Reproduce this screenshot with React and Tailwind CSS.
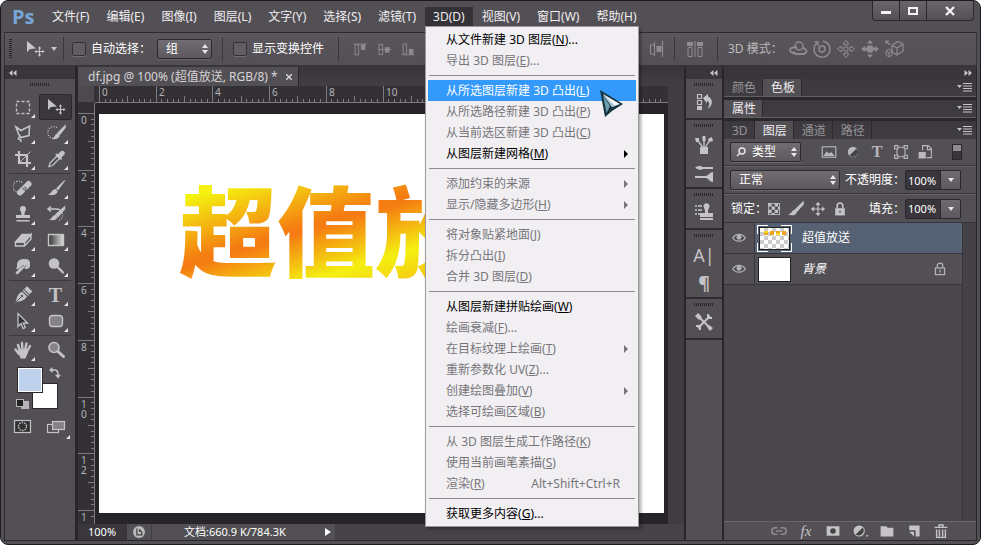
import { useState } from 'react'

const MENUS = [
  ['文件', 'F'], ['编辑', 'E'], ['图像', 'I'], ['图层', 'L'], ['文字', 'Y'], ['选择', 'S'],
  ['滤镜', 'T'], ['3D', 'D'], ['视图', 'V'], ['窗口', 'W'], ['帮助', 'H'],
]

const MENU_3D = [
  [
    { text: '从文件新建 3D 图层', hot: 'N', dots: true, on: true },
    { text: '导出 3D 图层', hot: 'E', dots: true },
  ],
  [
    { text: '从所选图层新建 3D 凸出', hot: 'L', on: true, active: true },
    { text: '从所选路径新建 3D 凸出', hot: 'P' },
    { text: '从当前选区新建 3D 凸出', hot: 'C' },
    { text: '从图层新建网格', hot: 'M', on: true, sub: true },
  ],
  [
    { text: '添加约束的来源', sub: true },
    { text: '显示/隐藏多边形', hot: 'H', sub: true },
  ],
  [
    { text: '将对象贴紧地面', hot: 'J' },
    { text: '拆分凸出', hot: 'I' },
    { text: '合并 3D 图层', hot: 'D' },
  ],
  [
    { text: '从图层新建拼贴绘画', hot: 'W', on: true },
    { text: '绘画衰减', hot: 'F', dots: true },
    { text: '在目标纹理上绘画', hot: 'T', sub: true },
    { text: '重新参数化 UV', hot: 'Z', dots: true },
    { text: '创建绘图叠加', hot: 'V', sub: true },
    { text: '选择可绘画区域', hot: 'B' },
  ],
  [
    { text: '从 3D 图层生成工作路径', hot: 'K' },
    { text: '使用当前画笔素描', hot: 'S' },
    { text: '渲染', hot: 'R', keys: 'Alt+Shift+Ctrl+R' },
  ],
  [{ text: '获取更多内容', hot: 'G', dots: true, on: true }],
]

function Icon({ children, className = 'size-5' }) {
  return (
    <svg viewBox="0 0 20 20" className={className} fill="none" stroke="currentColor" strokeWidth="1.4" aria-hidden="true">
      {children}
    </svg>
  )
}

/* toolbox drawings */
const MoveIcon = () => (
  <Icon>
    <path d="M2 2v11l3-3 6-.4z" fill="currentColor" stroke="none" />
    <path d="M14.500 8v9M10 12.500h9" strokeWidth="1.200" />
    <path d="M12.800 9.500l1.700-2.200 1.700 2.200zM12.800 15.500l1.700 2.200 1.700-2.200zM11.600 10.800l-2.200 1.700 2.200 1.700zM17.400 10.800l2.200 1.700-2.200 1.700z" fill="currentColor" stroke="none" />
  </Icon>
)
const Marquee = () => <Icon><rect x="3.500" y="4.500" width="13" height="12" strokeDasharray="3 2" /></Icon>
const Lasso = () => (
  <Icon>
    <path d="M3 4l5 3.500L16.500 3 16 12.500 8 14.500 5.500 11z" strokeWidth="1.600" />
    <path d="M8 14.500c-3-1-3.500 2-1.500 2s2 1 1 2.500" />
  </Icon>
)
const QuickSelect = () => (
  <Icon>
    <path d="M11 4.500a6 6 0 1 0-2 11" strokeDasharray="1 1.500" />
    <path d="M19 3l-7 7 1.500 1.500L19 4.500z" fill="currentColor" />
    <path d="M11.500 10.500c-3 .5-2 4-5.500 5 4 1.500 8-.5 7.500-3.500z" fill="currentColor" stroke="none" />
  </Icon>
)
const Crop = () => (
  <Icon>
    <path d="M6 2v12h12M2 6h12v12" strokeWidth="2.200" />
    <path d="M6 14L17.500 2.500" strokeWidth="1" />
  </Icon>
)
const Eyedropper = () => (
  <Icon>
    <path d="M3 17.500l1-3.500 7-7 2.500 2.500-7 7z" strokeWidth="1.300" />
    <path d="M10 5l5.500 5.500M12.500 6l3-3c1.500-1 3 .8 2 2l-3 3z" fill="currentColor" strokeWidth="2" />
  </Icon>
)
const Healing = () => (
  <Icon>
    <path d="M9 4.500a5.500 5.500 0 1 0-5 9.500" strokeDasharray="1 1.500" />
    <path d="M7 14.500l8.500-8.500" strokeWidth="6" strokeLinecap="round" />
    <path d="M9 9.500l4.500 4.500M10.500 8l4.500 4.500" stroke="#555" strokeWidth=".8" />
    <path d="M10.500 11h.8M12 12.500h.8M12.500 10h.8" stroke="#333" />
  </Icon>
)
const Brush = () => (
  <Icon>
    <path d="M18.500 2L10 10.500l2 2L19 3z" fill="currentColor" stroke="none" />
    <path d="M9.500 11c-3.500 0-3 4-7.500 5.500 4 1.500 9.500.5 9.500-3.500z" fill="currentColor" stroke="none" />
  </Icon>
)
const Stamp = () => (
  <Icon>
    <path d="M7 5a3 3 0 1 1 6 0c0 2-1.500 2.500-1.500 6H17v3H3v-3h5.500C8.500 7.500 7 7 7 5z" fill="currentColor" stroke="none" />
    <path d="M3.500 16.700h13" />
  </Icon>
)
const HistoryBrush = () => (
  <Icon>
    <path d="M2 5h8c3 0 4 1 4 1M5 2.500L2 5l3 2.500" strokeWidth="1.600" />
    <path d="M18.500 3L10 10.500l2 2L18.500 5z" fill="currentColor" />
    <path d="M9.500 11c-3.500 0-3 3.500-6.500 4.500 4 1.500 8.500.5 8.500-2.500z" fill="currentColor" stroke="none" />
    <path d="M16 9c1.500 3 0 6-4 8" strokeDasharray="1 1.500" />
  </Icon>
)
const Eraser = () => (
  <Icon>
    <path d="M2.500 12L9 4.500h9L11.500 12z" fill="currentColor" />
    <path d="M2.500 12v4h9l6.500-7V4.500L11.500 12v4M2.500 12h9" />
  </Icon>
)
const Gradient = () => (
  <Icon>
    <defs>
      <linearGradient id="toolFade"><stop stopColor="#333" /><stop offset="1" stopColor="#ddd" /></linearGradient>
    </defs>
    <rect x="2.500" y="4.500" width="15" height="11" fill="url(#toolFade)" />
  </Icon>
)
const Smudge = () => (
  <Icon>
    <path d="M4 9c0-4 3-6 7-6 3 0 6 .5 6 4v3c0 2-2 3-4 3l-2-1-6 6c-1.500 1-3-.5-2-2l4-4-2 1c-1.500.5-2.500-1-1-2z" fill="currentColor" stroke="none" />
    <path d="M7 12l4-3M10.500 12l3-2.500" stroke="#666" strokeWidth=".8" />
  </Icon>
)
const Dodge = () => (
  <Icon>
    <circle cx="8" cy="7.500" r="5.300" fill="currentColor" stroke="none" />
    <path d="M11.500 11l5.500 5.500" strokeWidth="2.200" strokeLinecap="round" />
  </Icon>
)
const Pen = () => (
  <Icon>
    <path d="M2.500 17.500C4 13 4 9.500 9 6.500l5 5c-3 4.500-6.500 4.500-11.500 6z" fill="currentColor" stroke="none" />
    <path d="M3 17l5.500-5.500" stroke="#555" strokeWidth="1" />
    <circle cx="9" cy="11" r="1.200" fill="#555" stroke="none" />
    <path d="M10 5l5.500 5.500M12 4l2-2 4.500 4.500-2 2z" fill="currentColor" strokeWidth="1.200" />
  </Icon>
)
const TypeTool = () => <span className="font-['Liberation_Serif',serif] text-[20px] leading-5 font-bold">T</span>
const PathSelect = () => <Icon><path d="M5 2.500v13l3-3 2.200 5 2-1-2-4.500h4.300z" fill="#333" strokeWidth="1.300" /></Icon>
const RoundRect = () => <Icon><rect x="3.500" y="4.500" width="13" height="11" rx="3" fill="#858287" /></Icon>
const Hand = () => (
  <Icon>
    <path d="M6 14L2.500 9.500M7 11L5 5M9.500 10L9 3M12 10l1.500-6.500M14 11.500L17 6" strokeWidth="2.400" strokeLinecap="round" />
    <path d="M4 11.500l3-2.500h7l1 2.500c0 3-2 4.500-2.500 7h-5c-.5-3-2-4-3.500-7z" fill="currentColor" stroke="none" />
  </Icon>
)
const ZoomTool = () => (
  <Icon>
    <circle cx="8" cy="7.500" r="5" fill="#858287" strokeWidth="1.600" />
    <path d="M12 11.500l5.500 5" strokeWidth="3" strokeLinecap="round" />
  </Icon>
)

const TOOL_GROUPS = [
  [['矩形选框', Marquee], ['移动', MoveIcon], ['套索', Lasso], ['快速选择', QuickSelect], ['裁剪', Crop], ['吸管', Eyedropper]],
  [['修复画笔', Healing], ['画笔', Brush], ['图章', Stamp], ['历史画笔', HistoryBrush], ['橡皮擦', Eraser], ['渐变', Gradient], ['涂抹', Smudge], ['减淡', Dodge]],
  [['钢笔', Pen], ['文字', TypeTool], ['路径选择', PathSelect], ['圆角矩形', RoundRect]],
  [['抓手', Hand], ['缩放', ZoomTool]],
]

function Grip() {
  return <div className="mx-auto h-[3px] w-5 bg-[repeating-linear-gradient(90deg,#2b282d_0_1px,transparent_1px_2px)]" />
}

function UpDown() {
  return (
    <svg viewBox="0 0 6 10" className="pointer-events-none absolute top-1/2 right-1 h-2.5 w-1.5 -translate-y-1/2" fill="#e8e6e9" aria-hidden="true">
      <path d="M3 0l3 4H0zM3 10l3-4H0z" />
    </svg>
  )
}

function Dropdown({ label, value, className, pad = 'pl-2' }) {
  return (
    <span className={`relative block h-5 ${className}`}>
      <select
        aria-label={label}
        className={`block h-5 w-full appearance-none rounded-xs border border-[#2d2a2f] bg-linear-to-b from-[#716d72] to-[#5c585d] pr-3 ${pad} text-[12px] leading-[18px] text-white shadow-[0_1px_0_#6a666b] outline-none`}
      >
        <option>{value}</option>
      </select>
      <UpDown />
    </span>
  )
}

function VRule({ className = '' }) {
  return <div className={`h-6 w-px shrink-0 bg-[#3a373c] ${className}`} />
}

function Menu3D() {
  return (
    <div role="menu" className="absolute top-full left-0 z-50 w-[214px] border border-[#9c999d] bg-[#f1eff2] py-0.5 shadow-[2px_2px_3px_rgba(0,0,0,.35)]">
      {MENU_3D.map((group, i) => (
        <div key={i}>
          {i > 0 && <div className="mx-[3px] my-1 h-px bg-[#8f8c90]" />}
          {group.map((item) => (
            <button
              key={item.text}
              role="menuitem"
              disabled={!item.on}
              className={`relative mx-0.5 flex h-[21px] w-[208px] items-center pl-[18px] text-left text-[12px] whitespace-pre ${
                item.active ? 'bg-[#3399fb] text-white' : item.on ? 'text-black' : 'text-[#77757a]'
              }`}
            >
              <span>
                {item.text}
                {item.hot && <>(<u className="underline-offset-1">{item.hot}</u>)</>}
                {item.dots && '...'}
              </span>
              {item.keys && <span className="mr-4 ml-auto">{item.keys}</span>}
              {item.sub && (
                <svg viewBox="0 0 4 8" className="mr-2 ml-auto h-2 w-1" fill="currentColor" aria-hidden="true"><path d="M0 0l4 4-4 4z" /></svg>
              )}
              {item.active && <Pointer />}
            </button>
          ))}
        </div>
      ))}
    </div>
  )
}

function Pointer() {
  return (
    <svg viewBox="0 0 24 28" className="absolute top-2.5 left-[172px] z-10 h-7 w-6" aria-hidden="true">
      <path d="M0 0l5 27 7-6 11-7z" fill="#14333f" />
      <path d="M3 5l3.500 18L10 16z" fill="#6fa0b2" />
      <path d="M3 4l9 13 8-3z" fill="#f2f8fa" />
      <path d="M3 4l9 13 3-1z" fill="#a8c3cd" />
    </svg>
  )
}

function MenuBar() {
  return (
    <header className="flex h-[31px] shrink-0 items-center pl-2">
      <span className="w-8 font-['Open_Sans',sans-serif] text-[20px] leading-7 font-bold text-[#78a5d6]">Ps</span>
      <nav className="flex gap-px text-[12px] text-[#f0eef1]">
        {MENUS.map(([name, key]) => (
          <div key={name} className="relative">
            <button className={`h-[19px] px-2 whitespace-nowrap ${name === '3D' ? 'bg-[#353237]' : ''}`}>
              {name}({key})
            </button>
            {name === '3D' && <Menu3D />}
          </div>
        ))}
      </nav>
      <div className="mr-[3px] ml-auto flex h-5 self-start overflow-hidden rounded-b border border-t-0 border-[#2a272c] bg-linear-to-b from-[#69656a] to-[#545055] text-[#f2f0f3]">
        <button aria-label="最小化" className="flex w-[27px] items-center justify-center border-r border-[#2a272c]"><span className="mt-1 h-[3px] w-2.5 bg-current" /></button>
        <button aria-label="最大化" className="flex w-[27px] items-center justify-center border-r border-[#2a272c]"><span className="h-2 w-2.5 border-2 border-current" /></button>
        <button aria-label="关闭" className="flex w-[46px] items-center justify-center">
          <svg viewBox="0 0 10 10" className="size-2.5" stroke="currentColor" strokeWidth="2.400"><path d="M1 1l8 8M9 1L1 9" /></svg>
        </button>
      </div>
    </header>
  )
}

function Align() {
  return (
    <>
      {['M3 4.500h14', 'M3 10.500h15', 'M3 16.500h14'].map((bar, i) => (
        <button key={bar} aria-label={['顶', '中', '底'][i]}>
          <Icon className="size-[18px]">
            <path d={bar} strokeWidth="1" />
            <rect x="4.500" y={[5.5, 5, 4.5][i]} width="4" height="11" strokeWidth="1" />
            <rect x="11" y={[5, 8, 10][i]} width="5" height="6" fill="currentColor" stroke="none" />
          </Icon>
        </button>
      ))}
    </>
  )
}

function OptionsBar() {
  const box = 'size-3.5 appearance-none rounded-xs border border-[#343136] bg-[#615d62] shadow-[0_1px_0_#716d72] checked:bg-[#9a979b]'
  return (
    <div className="flex h-[34px] shrink-0 items-center border border-b-[#39363b] border-t-[#2d2a2f] border-x-[#39363b] bg-linear-to-b from-[#5a565b] to-[#535055] text-[12px] text-white">
      <div className="ml-1 h-5 w-[3px] shrink-0 bg-[repeating-linear-gradient(#2b282d_0_1px,transparent_1px_2px)]" />
      <button aria-label="工具预设" className="ml-[13px] flex shrink-0 items-center text-[#c9c7ca]">
        <MoveIcon />
        <svg viewBox="0 0 6 4" className="ml-1.5 h-1 w-1.5" fill="currentColor"><path d="M0 0h6L3 4z" /></svg>
      </button>
      <VRule className="ml-1.5" />
      <label className="ml-2 flex shrink-0 items-center gap-[5px]"><input type="checkbox" className={box} />自动选择：</label>
      <Dropdown label="自动选择" value="组" className="ml-1.5 w-[55px] shrink-0" />
      <VRule className="ml-2.5" />
      <label className="ml-2.5 flex shrink-0 items-center gap-[5px]"><input type="checkbox" className={box} />显示变换控件</label>
      <VRule className="ml-3.5" />
      <div className="ml-3 flex shrink-0 items-center gap-1.5 text-[#8f8c90]"><Align /></div>
      <div className="ml-auto flex shrink-0 items-center text-[#8f8c90]">
        <Icon><path d="M4.500 6h4v9h-4zM16.500 2v16M8.500 3v14" strokeWidth="1.100" /><path d="M10.500 7h5v6h-5z" fill="currentColor" stroke="none" /></Icon>
        <VRule className="ml-2" />
        <Icon className="ml-2.5 size-5"><path d="M2 3h6v4H2zM12 3h6v4h-6z" fill="currentColor" stroke="none" /><path d="M3 8.500h4v9H3zM13 8.500h4v9h-4zM10 2v16" strokeWidth="1" /></Icon>
        <VRule className="ml-3" />
        <span className="mx-2.5 w-[50px] whitespace-nowrap text-[#bbb9bc]">3D 模式：</span>
        <div className="mr-[72px] flex gap-1">
          <Icon><circle cx="11" cy="7" r="4" /><path d="M9 8.500c-9-1-9 5-2 6l-1-2M12 15c8 1 8-5 3-6M7 15h8" strokeWidth="1.800" /></Icon>
          <Icon><circle cx="10" cy="10" r="3" /><path d="M5 4a8 8 0 1 0 6-1.700M2.500 3H6v4" /></Icon>
          <Icon><path d="M10 1.500l3 3.500h-2v4h4V7l3.500 3-3.500 3v-2h-4v4h2l-3 3.500L7 15h2v-4H5v2l-3.500-3L5 7v2h4V5H7z" strokeWidth="1" /></Icon>
          <Icon><circle cx="10" cy="10" r="3" fill="currentColor" /><path d="M10 1l3 3.500H7zM10 19l3-3.500H7zM1 10l4-3v6zM19 10l-4-3v6z" fill="currentColor" stroke="none" /><path d="M4 10h12" strokeWidth="2.400" /></Icon>
          <Icon><path d="M8 6l6-3.500L19 5v7l-6 4-5-3zM8 6l5 3 6-4M13 9v7M2 2l4 4M2 5V2h3" strokeWidth="1.200" /><path d="M2 12l3-2 3 2v4l-3 2-3-2zM2 12l3 2 3-2M5 14v4" strokeWidth="1" /></Icon>
        </div>
      </div>
    </div>
  )
}

function Toolbox() {
  const [tool, setTool] = useState('移动')
  return (
    <aside className="flex w-[71px] shrink-0 flex-col border-r border-[#29262b] bg-[#535055]">
      <div className="flex h-[13px] items-center bg-[#39363b] pl-1"><Chevrons /></div>
      <div className="pt-1 pb-2"><Grip /></div>
      {TOOL_GROUPS.map((group, i) => (
        <div key={i}>
          {i > 0 && <div className="mx-1 my-px h-px bg-[#3b383d]" />}
          <div className="ml-px grid w-[66px] grid-cols-2 text-[#c5c3c6]">
            {group.map(([name, Tool]) => (
              <button
                key={name}
                aria-label={name}
                onClick={() => setTool(name)}
                className={`relative flex h-[26px] items-center justify-center ${tool === name ? 'rounded-xs border border-[#2b282d] bg-[#3a373c]' : ''}`}
              >
                <Tool />
                {tool !== name && name !== '缩放' && (
                  <svg viewBox="0 0 4 4" className="absolute right-1 bottom-0.5 size-1" fill="#e8e6e9"><path d="M4 0v4H0z" /></svg>
                )}
              </button>
            ))}
          </div>
        </div>
      ))}
      <div className="relative mt-1 ml-3 h-[46px] w-11">
        <button aria-label="前景色" className="absolute top-0 left-0 z-10 size-[26px] border border-[#2b282d] bg-[#bed2ee] ring-1 ring-white ring-inset" />
        <button aria-label="背景色" className="absolute top-4 left-[15px] size-[26px] border border-[#2b282d] bg-white" />
        <Icon className="absolute top-0 left-8 size-3 text-[#c5c3c6]"><path d="M4 5h6c5 0 5 4 5 9" strokeWidth="2.400" /><path d="M6 0v10L0 5zM10 13h10l-5 6z" fill="currentColor" stroke="none" /></Icon>
        <span className="absolute top-[34px] left-1 size-2 bg-[#b5b3b6]" />
        <span className="absolute top-8 -left-px size-2 border border-[#b5b3b6] bg-[#222]" />
      </div>
      <div className="ml-px grid w-[66px] grid-cols-2 justify-items-center text-[#c5c3c6]">
        <button aria-label="快速蒙版" className="flex h-[26px] items-center">
          <Icon><rect x="1.500" y="4.500" width="16" height="12" fill="#333" strokeWidth="1.200" /><circle cx="9.500" cy="10.500" r="4" strokeDasharray="1.500 1" /></Icon>
        </button>
        <button aria-label="屏幕模式" className="relative flex h-[26px] items-center">
          <Icon><rect x="1.500" y="8.500" width="11" height="8" strokeWidth="1.200" /><rect x="6.500" y="5.500" width="12" height="8" fill="#858287" strokeWidth="1.200" /></Icon>
          <svg viewBox="0 0 4 4" className="absolute -right-1 bottom-0 size-1" fill="#e8e6e9"><path d="M4 0v4H0z" /></svg>
        </button>
      </div>
    </aside>
  )
}

function Chevrons({ right }) {
  return (
    <svg viewBox="0 0 8 6" className={`h-1.5 w-2 ${right ? 'rotate-180' : ''}`} fill="#c9c7ca" aria-hidden="true">
      <path d="M3.500 0v6L0 3zM7.500 0v6L4 3z" />
    </svg>
  )
}

const CM = 28.35

/* five divisions to a centimetre, numbers on every second one */
function Ruler({ vertical }) {
  const start = vertical ? 10 : 4
  const ticks = Array.from({ length: vertical ? 72 : 100 }, (_, i) => i)
  return (
    <svg className={vertical ? 'h-full w-[17px]' : 'h-[17px] w-full'} stroke="#7d7a7e" strokeWidth="1" shapeRendering="crispEdges">
      {ticks.map((i) => {
        const at = Math.round(start + (i * CM) / 5) + 0.5
        const from = i % 10 === 0 ? 0 : i % 5 === 0 ? 10 : 13
        return vertical
          ? <path key={i} d={`M${from} ${at}H16`} />
          : <path key={i} d={`M${at} ${from}V16`} />
      })}
      <path d={vertical ? 'M16.500 0V600' : 'M0 16.500H2000'} />
      {ticks.filter((i) => i % 10 === 0).map((i) => {
        const at = Math.round(start + (i * CM) / 5)
        const label = String((i / 10) * 2)
        if (!vertical) return <text key={i} x={at + 3} y="10" stroke="none" fill="#b5b3b6" fontSize="10">{label}</text>
        return [...(i === 70 ? label[0] : label)].map((c, n) => (
          <text key={`${i}-${n}`} x="3" y={at + 11 + n * 10} stroke="none" fill="#b5b3b6" fontSize="10">{c}</text>
        ))
      })}
    </svg>
  )
}

function Document() {
  return (
    <main className="flex min-w-0 flex-1 flex-col border-x-2 border-[#29262b] bg-[#39363b]">
      <div className="flex h-5 shrink-0 items-end bg-linear-to-b from-[#38353a] to-[#423f44]">
        <div className="flex h-[19px] w-[221px] items-center border-r border-[#29262b] bg-[#535055] pl-2.5 text-[12px] text-[#d6d4d7]">
          <span className="whitespace-nowrap">df.jpg @ 100% (超值放送, RGB/8) *</span>
          <button aria-label="关闭文档" className="ml-2">
            <svg viewBox="0 0 6 6" className="size-1.5" stroke="currentColor" strokeWidth="1.400"><path d="M0 0l6 6M6 0L0 6" /></svg>
          </button>
        </div>
      </div>
      <div className="flex min-h-0 flex-1">
        <div className="flex min-w-0 flex-1 flex-col">
          <div className="flex h-[17px] shrink-0 bg-[#343136]">
            <div className="mr-px h-4 w-4 shrink-0 bg-[#4d4a4f]" />
            <Ruler />
          </div>
          <div className="flex min-h-0 flex-1">
            <div className="w-[17px] shrink-0 bg-[#343136]"><Ruler vertical /></div>
            <div className="min-w-0 flex-1 bg-[#28252a] pt-[11px] pr-1 pb-[11px] pl-1">
              <div className="h-full overflow-hidden bg-white pt-[52px] pl-20">
                <p className="w-[300px] bg-[linear-gradient(163deg,#f4f010_34px,#f57c12_94px,#f57c12_100px,#f4f010_148px,#f57c12_240px)] bg-clip-text font-['Noto_Sans_CJK_SC',sans-serif] text-[98px] leading-[120px] font-black whitespace-nowrap text-transparent">
                  超值放
                </p>
              </div>
            </div>
          </div>
        </div>
        <div className="w-4 shrink-0 bg-[#403d42]" />
      </div>
      <footer className="flex h-4 shrink-0 items-center bg-[#464348] text-[11px] text-white">
        <span className="w-[49px] bg-[#3a373c] pl-2.5 leading-4">100%</span>
        <span className="flex h-4 w-6 items-center justify-center bg-[#535055]">
          <Icon className="size-3.5"><circle cx="10" cy="10" r="8.500" fill="#bbb" stroke="none" /><path d="M7 5v9h7v-4l-3-3v3" stroke="#444" strokeWidth="1.800" /></Icon>
        </span>
        <span className="h-4 w-[170px] border-l border-[#403d42] bg-[#535055] pl-8 leading-4 whitespace-nowrap">文档:660.9 K/784.3K</span>
        <button aria-label="状态菜单" className="flex h-4 w-3.5 items-center justify-center bg-[#535055]">
          <svg viewBox="0 0 6 8" className="h-2 w-1.5" fill="currentColor"><path d="M0 0l6 4-6 4z" /></svg>
        </button>
      </footer>
    </main>
  )
}

function DockSection({ children, className }) {
  return (
    <div className={`flex flex-col items-center border-b-2 border-[#2d2a2f] bg-[#535055] pt-1 text-[#c5c3c6] ${className}`}>
      <Grip />
      {children}
    </div>
  )
}

function Dock() {
  return (
    <aside className="flex w-[38px] shrink-0 flex-col border-r-2 border-[#29262b] bg-[#535055]">
      <div className="flex h-[13px] shrink-0 items-center justify-end bg-[#39363b] pr-1"><Chevrons /></div>
      <DockSection className="h-[41px]">
        <button aria-label="历史记录" className="mt-1.5">
          <Icon><path d="M3.500 2.500h4v4h-4zM3.500 8.500h4v4h-4z" strokeWidth="1.200" /><path d="M3 14h5v4H3zM9 6l5-4v2.500c5.500 2 5 9.500-.5 12.500 2.500-4.500 2.500-7-.5-8v2.500z" fill="currentColor" stroke="none" /></Icon>
        </button>
      </DockSection>
      <DockSection className="h-[69px]">
        <button aria-label="画笔" className="mt-2">
          <Icon><path d="M6 12h8v7H6z" fill="currentColor" stroke="none" /><path d="M8.500 12L3.500 5M10 12V5M11.500 12l5-8" /><path d="M1 3l4 0 0 4-3 0zM8.500 1h3v5h-3zM14 4l4-2 1 4-4 1z" fill="currentColor" stroke="none" /></Icon>
        </button>
        <button aria-label="画笔预设" className="mt-2">
          <Icon><path d="M1 5c3-3 6-2 8-1h10v2H9C6 8 4 6 1 5zM19 9v10c-3 0-4-3-7-4H1v-2h11c3-1 4-4 7-4z" fill="currentColor" stroke="none" /></Icon>
        </button>
      </DockSection>
      <DockSection className="h-[41px]">
        <button aria-label="仿制源" className="mt-1.5">
          <Icon><path d="M1 4h2M4 4h4M1 8h2M4 8h4M1 12h2M4 12h3" /><path d="M10 6a3 3 0 1 1 5 0c-1 1-1 3-1 5h5v4H6v-4h5c0-2 0-4-1-5zM6 16h13v2H6z" fill="currentColor" stroke="none" /></Icon>
        </button>
      </DockSection>
      <DockSection className="h-[69px]">
        <button aria-label="字符" className="mt-2 text-[18px] leading-5">A|</button>
        <button aria-label="段落" className="mt-2 text-[18px] leading-5 font-bold">¶</button>
      </DockSection>
      <DockSection className="h-[41px]">
        <button aria-label="工具预设" className="mt-1.5">
          <Icon><path d="M4 4l12 12M16 4L4 16" strokeWidth="2" /><path d="M1 4l3-3 4 4-3 3zM13 15l2-2 4 3-3 3z" fill="currentColor" stroke="none" /><path d="M14 2v4h4M2 14h4v4" strokeWidth="2" /></Icon>
        </button>
      </DockSection>
    </aside>
  )
}

function PanelTabs({ tabs, current, last }) {
  return (
    <div className={`flex h-[18px] shrink-0 items-stretch bg-linear-to-b from-[#3c393e] to-[#403d42] text-[12px] ${last ? '' : 'mb-[3px] border-b border-[#615e62]'}`}>
      {tabs.map((tab) => (
        <button
          key={tab}
          className={`border-r border-[#2d2a2f] pr-1.5 pl-2 leading-[17px] ${tab === current ? 'bg-[#535055] text-[#f0eef1]' : 'text-[#969397]'}`}
        >
          {tab}
        </button>
      ))}
      <button aria-label="面板菜单" className="mr-1 ml-auto">
        <svg viewBox="0 0 15 9" className="h-[9px] w-[15px]" fill="#c5c3c6"><path d="M0 2h5L2.500 5zM6 0h9v1H6zM6 2.500h9v1H6zM6 5h9v1H6zM6 7.500h9v1H6z" /></svg>
      </button>
    </div>
  )
}

function Percent({ label }) {
  return (
    <div className="flex h-5 items-center text-[12px]">
      <label htmlFor={label} className="whitespace-nowrap">{label}：</label>
      <input id={label} defaultValue="100%" className="h-5 w-9 rounded-l-xs border border-[#2b282d] bg-[#39363b] px-0.5 text-[11px] text-white outline-none" />
      <button aria-label={`${label}滑块`} className="flex h-5 w-5 items-center justify-center rounded-r-xs border border-l-0 border-[#2b282d] bg-linear-to-b from-[#6f6b70] to-[#5c585d]">
        <svg viewBox="0 0 6 4" className="h-1 w-1.5" fill="#e8e6e9"><path d="M0 0h6L3 4z" /></svg>
      </button>
    </div>
  )
}

const Lock = () => <Icon className="size-4"><rect x="4" y="9" width="12" height="9" fill="currentColor" stroke="none" /><path d="M6.500 9V6a3.500 3.500 0 0 1 7 0v3" strokeWidth="2" /><path d="M10 12v3" stroke="#444" /></Icon>

const Eye = () => (
  <Icon className="size-3.5"><path d="M1 10c4-7 14-7 18 0-4 6-14 6-18 0z" strokeWidth="1.800" /><circle cx="10" cy="9" r="3.500" fill="currentColor" stroke="none" /></Icon>
)

function Layer({ name, selected, italic, locked, children }) {
  return (
    <li className="flex h-[31px] border-b border-[#39363b] bg-[#535055]">
      <button aria-label="可见性" className="flex w-[31px] shrink-0 items-center justify-center border-r border-[#39363b] text-[#b5b3b6]"><Eye /></button>
      <div className={`flex flex-1 items-center pl-0.5 ${selected ? 'bg-[#566273]' : ''}`}>
        {children}
        <span className={`ml-2.5 text-[12px] text-white ${italic ? 'italic' : ''}`}>{name}</span>
        {locked && (
          <span className="mr-[15px] ml-auto text-[#b5b3b6]">
            <Icon className="size-3.5"><rect x="3.500" y="8.500" width="13" height="9.500" strokeWidth="1.800" /><path d="M6 8V5.500a4 4 0 0 1 8 0V8M10 11v4" strokeWidth="1.800" /></Icon>
          </span>
        )}
      </div>
    </li>
  )
}

function Panels() {
  return (
    <aside className="flex w-[252px] shrink-0 flex-col bg-[#535055] text-white">
      <div className="flex h-[13px] shrink-0 items-center justify-end bg-[#39363b] pr-1"><Chevrons right /></div>
      <div className="flex flex-col bg-[#2b282d]">
        <PanelTabs tabs={['颜色', '色板']} current="色板" />
        <PanelTabs tabs={['属性']} current="属性" />
        <PanelTabs tabs={['3D', '图层', '通道', '路径']} current="图层" last />
      </div>
      <div className="flex h-[27px] shrink-0 items-center border-b border-[#3a373c] pl-1.5 text-[#b9b7ba]">
        <div className="relative">
          <Dropdown label="类型" value="类型" className="w-[71px]" pad="pl-[21px]" />
          <svg viewBox="0 0 10 10" className="pointer-events-none absolute top-[5px] left-1.5 size-2.5" fill="none" stroke="#e8e6e9" strokeWidth="1.400"><circle cx="6" cy="4" r="3" /><path d="M4 6L1 9" /></svg>
        </div>
        <div className="ml-5 flex items-center gap-2">
          <Icon className="size-4"><rect x="1.500" y="3.500" width="17" height="13" /><path d="M3 15l4-6 3 3 3-2 4 5z" fill="currentColor" stroke="none" /></Icon>
          <Icon className="size-4"><circle cx="10" cy="10" r="6.500" fill="currentColor" stroke="none" /><path d="M5.500 14.500a6 6 0 0 0 9-9z" fill="#444" stroke="none" /></Icon>
          <span className="w-4 text-center font-['Liberation_Serif',serif] text-[16px] leading-4 font-bold">T</span>
          <Icon className="size-4"><path d="M5 4h10v12H5z" /><path d="M2 2h4v4H2zM14 2h4v4h-4zM2 14h4v4H2zM14 14h4v4h-4z" fill="#535055" /></Icon>
          <Icon className="size-4"><path d="M7 8V2h7l4 4v11h-6M13 2v5h5" /><path d="M2 10h9v8H2z" fill="currentColor" stroke="none" /></Icon>
        </div>
        <button aria-label="滤镜开关" className="mr-[14px] ml-auto flex h-4 w-2.5 flex-col border border-[#2b282d] bg-[#39363b]"><span className="h-1.5 w-full bg-[#8f8c90]" /></button>
      </div>
      <div className="flex h-7 shrink-0 items-center justify-between border-t border-b border-t-[#656266] border-b-[#3a373c] pr-[15px] pl-1.5">
        <Dropdown label="混合模式" value="正常" className="w-[110px]" />
        <Percent label="不透明度" />
      </div>
      <div className="flex h-[29px] shrink-0 items-center border-t border-t-[#656266] border-b border-b-[#39363b] pr-[15px] pl-[7px]">
        <span className="w-[35px] text-[12px] whitespace-nowrap">锁定：</span>
        <div className="flex items-center gap-1.5 text-[#c5c3c6]">
          <Icon className="size-4"><rect x="3" y="3" width="14" height="14" strokeWidth="1" /><path d="M3 3h4v4H3zM11 3h4v4h-4zM7 7h4v4H7zM3 11h4v4H3zM11 11h4v4h-4zM15 7h2v4h-2zM7 15h4v2H7z" fill="currentColor" stroke="none" /></Icon>
          <Icon className="size-4"><path d="M19 1L9 11l2 2 8-9z" fill="currentColor" /><path d="M8.500 11C5 11 5 16 0 17c5 2 11 1 11-4z" fill="currentColor" stroke="none" /></Icon>
          <Icon className="size-4"><path d="M10 3v14M3 10h14" /><path d="M7 5l3-4 3 4zM7 15l3 4 3-4zM5 7l-4 3 4 3zM15 7l4 3-4 3z" fill="currentColor" stroke="none" /></Icon>
          <Lock />
        </div>
        <div className="ml-auto"><Percent label="填充" /></div>
      </div>
      <div className="flex min-h-0 flex-1 bg-[#4a474c]">
        <ul className="flex-1">
          <Layer name="超值放送" selected>
            <span className="relative flex h-[27px] w-[35px] items-center justify-center border border-white">
              <span className="h-[23px] w-[31px] border border-[#222] bg-white bg-[repeating-conic-gradient(#ccc_0_25%,#fff_0_50%)] bg-size-[8px_8px] pt-0.5 text-center">
                <svg viewBox="0 0 24 6" className="mx-auto h-1.5 w-6" aria-hidden="true">
                  <path d="M1 1h4v4H1zM7 1h4v4H7zM13 1h4v4h-4zM19 1h4v4h-4z" fill="#f5a21a" /><path d="M1 1h4v2H1zM13 3h4v2h-4z" fill="#f1dc1c" />
                </svg>
              </span>
              <span className="absolute inset-x-2.5 -top-px h-px bg-[#566273]" />
              <span className="absolute inset-x-2.5 -bottom-px h-px bg-[#566273]" />
              <span className="absolute inset-y-2 -left-px w-px bg-[#566273]" />
              <span className="absolute inset-y-2 -right-px w-px bg-[#566273]" />
            </span>
          </Layer>
          <Layer name="背景" italic locked>
            <span className="mx-px h-[25px] w-[33px] border border-[#222] bg-white" />
          </Layer>
        </ul>
        <div className="w-3.5 border-l border-[#39363b] bg-[#454247]" />
      </div>
      <div className="flex h-[19px] shrink-0 items-center justify-end gap-[11px] border-t border-[#6a676b] pr-[27px] text-[#c5c3c6]">
        <button aria-label="链接" className="text-[#8f8c90]"><Icon className="size-4"><path d="M8 6H5a4 4 0 0 0 0 8h3M12 6h3a4 4 0 0 1 0 8h-3M6 10h8" strokeWidth="2" /></Icon></button>
        <button aria-label="图层样式" className="w-4 font-['Liberation_Serif',serif] text-[15px] leading-4 italic">fx</button>
        <button aria-label="蒙版"><Icon className="size-4"><path d="M2 4h16v12H2z" fill="currentColor" stroke="none" /><circle cx="10" cy="10" r="3.500" fill="#444" stroke="none" /></Icon></button>
        <button aria-label="调整"><Icon className="size-4"><circle cx="9" cy="10" r="7" fill="currentColor" stroke="none" /><path d="M4.500 14.500a6.500 6.500 0 0 0 9-9z" fill="#444" stroke="none" /><path d="M18 16h2" strokeWidth="2" /></Icon></button>
        <button aria-label="组"><Icon className="size-4"><path d="M2 4h7l2 2h7v11H2z" fill="currentColor" stroke="none" /></Icon></button>
        <button aria-label="新建"><Icon className="size-4"><path d="M4 3h13v14h-5V9H4z" fill="currentColor" stroke="none" /><path d="M4 11h6v6z" fill="currentColor" stroke="none" /></Icon></button>
        <button aria-label="删除"><Icon className="size-4"><path d="M2 5.500h16M7.500 5V2.500h5V5M4.500 8v10h11V8M8 8v9M12 8v9" strokeWidth="1.800" /></Icon></button>
      </div>
    </aside>
  )
}

export default function App() {
  return (
    <div className="flex h-screen flex-col overflow-hidden rounded-lg border border-[#1d1a1f] bg-[#535055] px-[3px] pb-[3px] font-['Noto_Sans','Noto_Sans_CJK_SC',sans-serif] select-none">
      <MenuBar />
      <OptionsBar />
      <div className="flex min-h-0 flex-1 border border-t-0 border-[#29262b]">
        <Toolbox />
        <Document />
        <Dock />
        <Panels />
      </div>
    </div>
  )
}
